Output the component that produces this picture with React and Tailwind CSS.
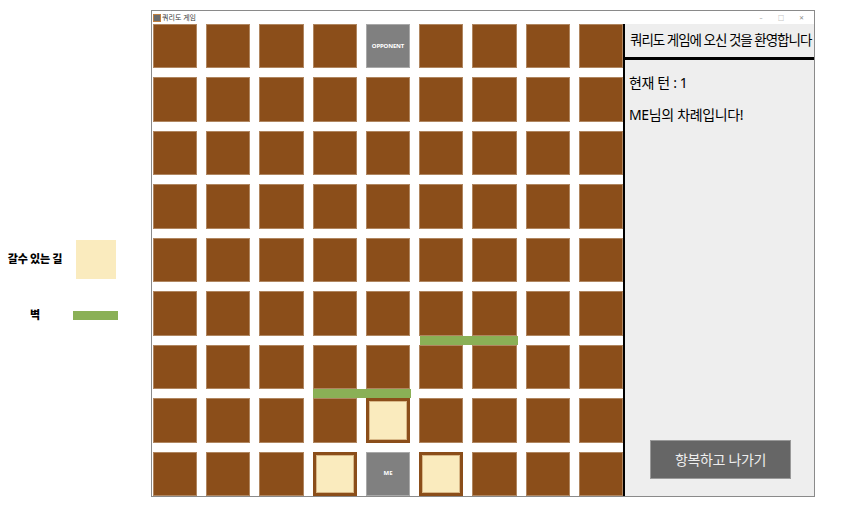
import React from 'react';

const N = 9;
const PITCH = 53.44;

const walls = [
  { row: 6, col: 5 },
  { row: 7, col: 3 },
];

const movable = ['7-4', '8-3', '8-5'];

function Cell({ r, c }) {
  if (r === 0 && c === 4) {
    return (
      <div className="bg-[#808080] border border-[#a9a9a9] flex items-center justify-center">
        <span className="text-[6px] font-bold text-white tracking-tight">OPPONENT</span>
      </div>
    );
  }
  if (r === 8 && c === 4) {
    return (
      <div className="bg-[#808080] border border-[#a9a9a9] flex items-center justify-center">
        <span className="text-[6px] font-bold text-white">ME</span>
      </div>
    );
  }
  if (movable.includes(`${r}-${c}`)) {
    return <div className="bg-[#faebbe] border-[3px] border-[#8b4e1a] shadow-[inset_0_0_0_1px_#d8b888]" />;
  }
  return <div className="bg-[#8b4e1a] border border-[#b08660]" />;
}

export default function App() {
  const cells = [];
  for (let r = 0; r < N; r++) for (let c = 0; c < N; c++) cells.push(<Cell key={`${r}-${c}`} r={r} c={c} />);

  return (
    <div className="w-[862px] h-[514px] bg-white flex font-['Noto_Sans','Noto_Sans_CJK_KR',sans-serif] text-black">
      {/* legend */}
      <div className="w-[151px] shrink-0 pt-[240px] flex flex-col">
        <div className="flex items-center">
          <span className="w-[70px] text-center text-[11px] font-black tracking-tight">갈수 있는 길</span>
          <div className="ml-[6px] w-[40px] h-[39px] bg-[#faebbe]" />
        </div>
        <div className="flex items-center mt-[28px]">
          <span className="w-[70px] text-center text-[11px] font-black">벽</span>
          <div className="ml-[3px] w-[45px] h-[9px] bg-[#8ab056]" />
        </div>
      </div>

      {/* window */}
      <div className="mt-[10px] w-[664px] h-[487px] border border-[#8a8a8a] flex flex-col bg-white">
        <div className="h-[13px] flex items-center px-px">
          <div className="w-[8px] h-[8px] bg-[#6b6b6b] border border-[#c08040] mr-[1px]" />
          <span className="text-[7px] text-[#333] leading-none">쿼리도 게임</span>
          <div className="ml-auto flex items-center gap-[12px] pr-[8px] text-[6px] text-[#888] leading-none">
            <span className="w-[8px] text-center">–</span>
            <span className="w-[8px] text-center">□</span>
            <span className="w-[8px] text-center">✕</span>
          </div>
        </div>
        <div className="flex flex-1">
          <div className="relative w-[471px] h-[472px] pl-px">
            <div className="grid grid-cols-9 grid-rows-9 gap-[9px] w-full h-full">{cells}</div>
            {walls.map((w, i) => (
              <div
                key={i}
                className="absolute h-[9px] bg-[#8ab056]"
                style={{ left: 1 + w.col * PITCH, top: w.row * PITCH - 9, width: PITCH * 2 - 9 }}
              />
            ))}
          </div>
          <div className="flex-1 border-l-2 border-black bg-[#eeeeee] flex flex-col">
            <div className="h-[36px] border-b-[3px] border-black flex items-center pl-[5px] text-[13.5px] tracking-[-1px] whitespace-nowrap">
              쿼리도 게임에 오신 것을 환영합니다
            </div>
            <div className="pl-[4px] pt-[12px] text-[14px] tracking-tight">현재 턴 : 1</div>
            <div className="pl-[4px] pt-[11px] text-[14px] tracking-tight">ME님의 차례입니다!</div>
            <button className="mt-auto mb-[17px] ml-[25px] w-[141px] h-[39px] bg-[#666666] border border-[#999] text-[#eeeeee] text-[14px] tracking-tight">
              항복하고 나가기
            </button>
          </div>
        </div>
      </div>
    </div>
  );
}
